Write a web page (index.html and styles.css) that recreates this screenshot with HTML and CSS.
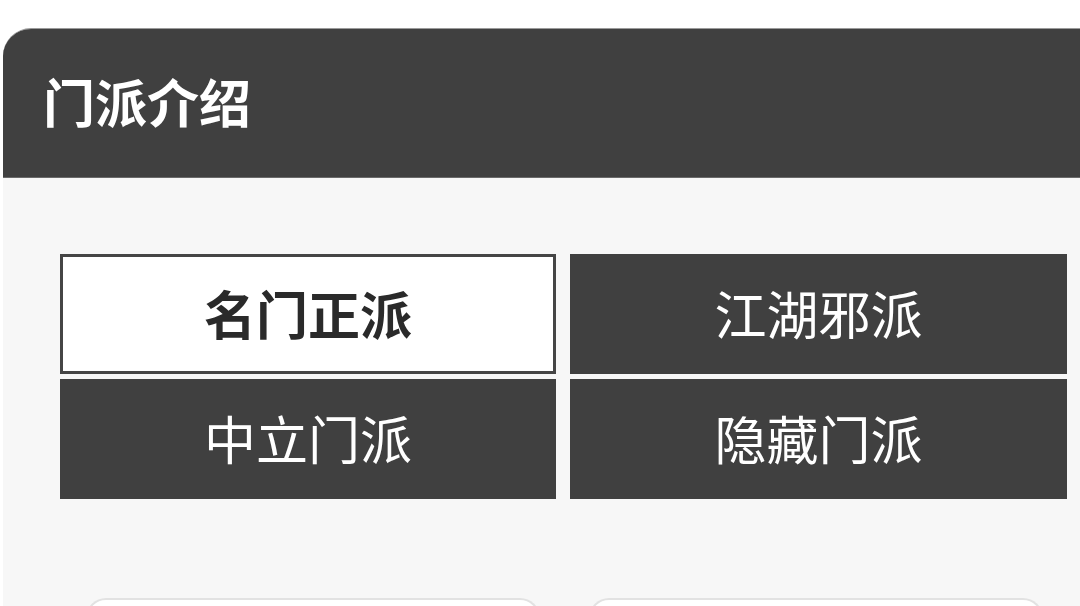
FILE: index.html
```html
<!DOCTYPE html>
<html lang="zh-CN">
<head>
<meta charset="utf-8">
<title>门派介绍</title>
<link rel="stylesheet" href="styles.css">
</head>
<body>
<div class="card">
  <div class="card-header">
    <h1 class="card-title">门派介绍</h1>
  </div>
  <div class="card-body">
    <div class="tabs">
      <div class="tab active">名门正派</div>
      <div class="tab">江湖邪派</div>
      <div class="tab">中立门派</div>
      <div class="tab">隐藏门派</div>
    </div>
    <div class="items">
      <div class="item"></div>
      <div class="item"></div>
    </div>
  </div>
</div>
</body>
</html>
```
FILE: styles.css
```css
html, body {
  margin: 0;
  padding: 0;
  background: #ffffff;
  overflow: hidden;
  height: 606px;
}
body {
  font-family: "Noto Sans CJK SC", "Noto Sans", sans-serif;
}
.card {
  margin: 28px -40px 0 3px;
  border-top-left-radius: 28px;
  overflow: hidden;
  background: #f7f7f7;
  border-top: 1px solid #9a9a9a;
  height: 577px;
}
.card-header {
  height: 149px;
  background: #404040;
  display: flex;
  align-items: center;
  padding-left: 40px;
  border-bottom: 1px solid #6a6a6a;
  box-sizing: border-box;
  padding-bottom: 4px;
}
.card-title {
  margin: 0;
  color: #ffffff;
  font-size: 52px;
  font-weight: 700;
  line-height: 1;
}
.card-body {
  padding: 76px 0 0 57px;
}
.tabs {
  display: grid;
  grid-template-columns: 496px 497px;
  grid-auto-rows: 120px;
  column-gap: 14px;
  row-gap: 5px;
}
.tab {
  background: #404040;
  color: #ffffff;
  font-size: 52px;
  line-height: 1;
  display: flex;
  align-items: center;
  justify-content: center;
  box-sizing: border-box;
  padding-bottom: 2px;
}
.tab.active {
  background: #ffffff;
  color: #2a2a2a;
  font-weight: 700;
  border: 3px solid #454545;
}
.items {
  display: grid;
  grid-template-columns: 454px 454px;
  column-gap: 49px;
  margin: 99px 0 0 26px;
}
.item {
  height: 20px;
  background: #ffffff;
  border: 2px solid #e2e2e2;
  border-bottom: 0;
  border-radius: 20px 20px 0 0;
}
```
